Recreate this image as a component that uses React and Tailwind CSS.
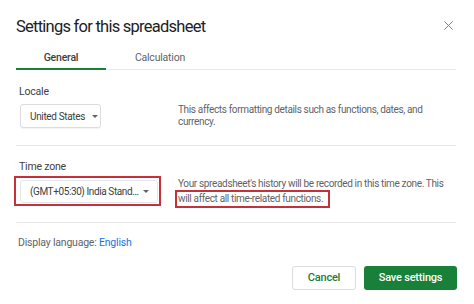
function Caret() {
  return (
    <span className="w-0 h-0 border-l-[3px] border-r-[3px] border-t-[3px] border-l-transparent border-r-transparent border-t-[#5f6368]" />
  );
}

export default function App() {
  return (
    <div className="w-[474px] h-[304px] bg-white text-[#3c4043] font-['Roboto',sans-serif] overflow-hidden">
      <div className="pl-4 pr-[18px]">
        {/* header */}
        <div className="flex items-start justify-between h-[47px] pt-[16px]">
          <h1 className="text-[16.5px] leading-[21px] tracking-[-0.75px] text-[#202124]">
            Settings for this spreadsheet
          </h1>
          <svg width="11" height="11" viewBox="0 0 24 24" className="mt-[4px] mr-[2px] text-[#70757a]">
            <path d="M3 3L21 21M21 3L3 21" stroke="currentColor" strokeWidth="2" />
          </svg>
        </div>

        {/* tabs */}
        <div className="flex h-[23px] border-b border-[#e8eaed] text-[10.5px] font-medium tracking-[-0.2px]">
          <div className="w-[90px] flex items-center justify-center text-[#3c4043] border-b-2 border-[#188038] mb-[-1px]">General</div>
          <div className="w-[108px] flex items-center justify-center text-[#5f6368] font-normal">Calculation</div>
        </div>

        {/* locale */}
        <div className="pl-[3px] pt-[15px] pb-[17px] border-b border-[#e8eaed]">
          <div className="text-[10.5px] leading-[14px] tracking-[-0.2px]">Locale</div>
          <div className="flex items-start mt-[5px]">
            <div className="w-[159px] shrink-0 pl-[1px]">
              <div className="w-[81px] h-[24px] border border-[#dadce0] rounded-[3px] flex items-center pl-[9px] text-[10px] tracking-[-0.35px] text-[#3c4043] whitespace-nowrap shadow-[0_1px_1px_rgba(0,0,0,0.05)]">
                United States
                <span className="ml-[7px] flex"><Caret /></span>
              </div>
            </div>
            <p className="text-[10px] leading-[12px] tracking-[-0.35px] text-[#5f6368] whitespace-nowrap">
              This affects formatting details such as functions, dates, and<br />currency.
            </p>
          </div>
        </div>

        {/* time zone */}
        <div className="pl-[3px] pt-[14px] pb-[14px] border-b border-[#e8eaed]">
          <div className="text-[10.5px] leading-[14px] tracking-[-0.2px]">Time zone</div>
          <div className="flex items-start mt-[2px]">
            <div className="w-[161px] shrink-0 -ml-[5px]">
              <div className="w-[147px] h-[30px] border-2 border-[#c5303a] flex items-center pl-[4px]">
                <div className="w-[138px] h-[23px] border border-[#e3e5e8] rounded-[3px] flex items-center pl-[9px] text-[10px] tracking-[-0.4px] text-[#3c4043] whitespace-nowrap">
                  (GMT+05:30) India Stand…
                  <span className="ml-auto mr-[8px] flex"><Caret /></span>
                </div>
              </div>
            </div>
            <div className="text-[10px] leading-[13px] tracking-[-0.35px] text-[#5f6368] whitespace-nowrap pt-[1px]">
              <div className="pl-[3px]">Your spreadsheet's history will be recorded in this time zone. This</div>
              <div className="inline-block h-[18px] border-2 border-[#c5303a] pl-[1px] pr-[5px] leading-[13px]">will affect all time-related functions.</div>
            </div>
          </div>
        </div>

        {/* display language */}
        <div className="pl-[2px] pt-[13px] text-[10.5px] leading-[14px] tracking-[-0.2px] text-[#5f6368]">
          Display language: <span className="text-[#1a73e8]">English</span>
        </div>

        {/* buttons */}
        <div className="flex justify-end gap-[8px] mt-[16px] -mr-[1px]">
          <button className="w-[64px] h-[24px] border border-[#dadce0] rounded-[3px] text-[11px] font-medium tracking-[-0.2px] text-[#188038]">Cancel</button>
          <button className="w-[93px] h-[24px] rounded-[3px] bg-[#188038] text-white text-[11px] font-medium tracking-[-0.2px]">Save settings</button>
        </div>
      </div>
    </div>
  );
}
